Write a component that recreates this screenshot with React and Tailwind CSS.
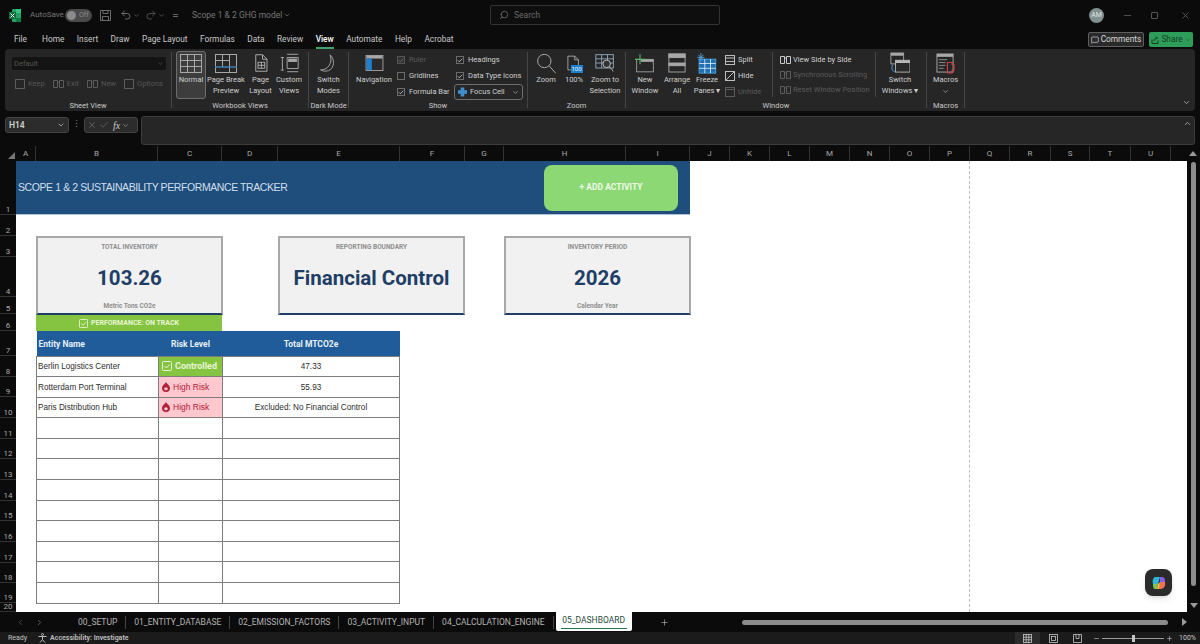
import React from 'react';
import { Search, ChevronDown, Undo2, Redo2, MessageSquare, Minus, Plus, X, Check, ChevronLeft, ChevronRight } from 'lucide-react';

const columns = [
  { label: 'A', w: 'w-[20px]' }, { label: 'B', w: 'w-[122px]' }, { label: 'C', w: 'w-[64px]' },
  { label: 'D', w: 'w-[56px]' }, { label: 'E', w: 'w-[122px]' }, { label: 'F', w: 'w-[65px]' },
  { label: 'G', w: 'w-[39px]' }, { label: 'H', w: 'w-[122px]' }, { label: 'I', w: 'w-[64px]' },
  { label: 'J', w: 'w-[40px]' }, { label: 'K', w: 'w-[40px]' }, { label: 'L', w: 'w-[40px]' },
  { label: 'M', w: 'w-[40px]' }, { label: 'N', w: 'w-[40px]' }, { label: 'O', w: 'w-[40px]' },
  { label: 'P', w: 'w-[40px]' }, { label: 'Q', w: 'w-[40px]' }, { label: 'R', w: 'w-[41px]' },
  { label: 'S', w: 'w-[39px]' }, { label: 'T', w: 'w-[41px]' }, { label: 'U', w: 'w-[40px]' },
];

const rowHeads = [
  { n: 1, h: 'h-[54px]' }, { n: 2, h: 'h-[21px]' }, { n: 3, h: 'h-[21px]' }, { n: 4, h: 'h-[40px]' },
  { n: 5, h: 'h-[17px]' }, { n: 6, h: 'h-[17px]' }, { n: 7, h: 'h-[25px]' }, { n: 8, h: 'h-[21px]' },
  { n: 9, h: 'h-[20px]' }, { n: 10, h: 'h-[21px]' }, { n: 11, h: 'h-[21px]' }, { n: 12, h: 'h-[20px]' },
  { n: 13, h: 'h-[21px]' }, { n: 14, h: 'h-[21px]' }, { n: 15, h: 'h-[20px]' }, { n: 16, h: 'h-[21px]' },
  { n: 17, h: 'h-[21px]' }, { n: 18, h: 'h-[20px]' }, { n: 19, h: 'h-[20px]' }, { n: 20, h: 'h-[9px]' },
];

const menu = ['Home', 'Insert', 'Draw', 'Page Layout', 'Formulas', 'Data', 'Review', 'View', 'Automate', 'Help', 'Acrobat'];

const entities = [
  { name: 'Berlin Logistics Center', risk: 'ok', total: '47.33' },
  { name: 'Rotterdam Port Terminal', risk: 'high', total: '55.93' },
  { name: 'Paris Distribution Hub', risk: 'high', total: 'Excluded: No Financial Control' },
  {}, {}, {}, {}, {}, {}, {}, {}, {},
];

const Ico = ({ className, children, box = '0 0 24 24' }) => (
  <svg className={className} viewBox={box} fill="none" stroke="currentColor" strokeWidth="1.200">{children}</svg>
);

const GridIcon = () => (
  <svg className="w-[22px] h-[19px] text-[#a8a8a8]" viewBox="0 0 22 19" fill="none" stroke="currentColor">
    <rect x="0.500" y="0.500" width="21" height="18" />
    <path d="M0 6.500h22M0 12.500h22M7.500 0v19M14.500 0v19" />
  </svg>
);
const BreakIcon = () => (
  <svg className="w-[22px] h-[19px] text-[#a8a8a8]" viewBox="0 0 22 19" fill="none" stroke="currentColor">
    <rect x="0.500" y="0.500" width="21" height="18" />
    <path d="M0 6.500h14M7.500 0v13M14.500 0v19" />
    <path d="M0 13h22" stroke="#3f7fb5" strokeWidth="1.500" />
  </svg>
);
const PageIcon = () => (
  <Ico className="w-[18px] h-[20px] text-[#b5b5b5]">
    <path d="M5 1h9l6 6v16H5z" />
    <path d="M14 1v6h6" />
    <rect x="8" y="11" width="9" height="8" />
    <path d="M8 15h9M12.500 11v8" />
  </Ico>
);
const CustomIcon = () => (
  <Ico className="w-[19px] h-[20px] text-[#a8a8a8]">
    <path d="M9 1h14M9 23h14M3 5v16M1 5h4M1 21h4M9 5h14v14H9z" />
    <rect x="11" y="7" width="10" height="3" fill="#a8a8a8" />
  </Ico>
);
const MoonIcon = () => (
  <Ico className="w-[19px] h-[21px] text-[#a8a8a8]">
    <path d="M14 1c6 5 6 17-2 20-3 1-7 1-10-1 8 1 16-8 12-19z" />
  </Ico>
);
const NavIcon = () => (
  <svg className="w-[19px] h-[16px]" viewBox="0 0 20 18">
    <rect x="0.500" y="0.500" width="19" height="17" fill="#2a2a2a" stroke="#a8a8a8" />
    <rect x="1" y="1" width="18" height="3" fill="#a8a8a8" />
    <rect x="1" y="4" width="6" height="13" fill="#1d7fd0" />
  </svg>
);
const ZoomIcon = () => (
  <Ico className="w-[20px] h-[21px] text-[#a8a8a8]">
    <circle cx="10" cy="9" r="8" />
    <path d="M16 15l8 9" />
  </Ico>
);
const HundredIcon = () => (
  <div className="relative w-[17px] h-[20px]">
    <Ico className="w-[15px] h-[20px] text-[#c0c0c0]">
      <path d="M3 1h11l6 6v16H3z" />
      <path d="M14 1v6h6" />
    </Ico>
    <span className="absolute right-0 bottom-0 w-[12px] h-[8px] bg-[#1d7fd0] text-[6px] leading-[8px] text-center text-[#e8f4ff]">100</span>
  </div>
);
const ZoomSelIcon = () => (
  <svg className="w-[20px] h-[20px]" viewBox="0 0 24 24" fill="none" stroke="#8fa7ba" strokeWidth="1.100">
    <rect x="1" y="2" width="21" height="16" />
    <path d="M1 7h21M1 12h21M8 2v16M15 2v16" />
    <circle cx="14" cy="13" r="4.500" fill="#333" stroke="#c4c4c4" />
    <path d="M17 16l5 6" stroke="#c4c4c4" />
  </svg>
);
const NewWindowIcon = () => (
  <svg className="w-[20px] h-[19px]" viewBox="0 0 24 22" fill="none">
    <rect x="2" y="6" width="20" height="15" stroke="#a8a8a8" />
    <rect x="7" y="6" width="15" height="3" fill="#a8a8a8" />
    <path d="M6 0v12M0 6h12" stroke="#62b36a" strokeWidth="1.300" />
  </svg>
);
const ArrangeIcon = () => (
  <svg className="w-[18px] h-[20px]" viewBox="0 0 20 22" fill="none" stroke="#a8a8a8">
    <rect x="1" y="1" width="18" height="20" />
    <rect x="1" y="1" width="18" height="4" fill="#a8a8a8" />
    <rect x="1" y="11" width="18" height="3" fill="#a8a8a8" />
  </svg>
);
const FreezeIcon = () => (
  <svg className="w-[20px] h-[21px]" viewBox="0 0 22 24" fill="none">
    <rect x="2" y="7" width="19" height="16" fill="#1f6fb2" stroke="#4fa3e0" />
    <path d="M2 12h19M2 17.500h19M8.500 7v16M15 7v16" stroke="#d5e8f6" />
    <path d="M4 0v10M0 5h8M1 2l6 6M7 2l-6 6" stroke="#4fa3e0" />
  </svg>
);
const SwitchIcon = () => (
  <svg className="w-[20px] h-[22px]" viewBox="0 0 22 24" fill="none">
    <rect x="1" y="1" width="14" height="12" stroke="#a8a8a8" />
    <rect x="1" y="1" width="14" height="3" fill="#a8a8a8" />
    <rect x="6" y="9" width="16" height="13" fill="#2a2a2a" stroke="#b8b8b8" />
    <rect x="6" y="9" width="16" height="3" fill="#b8b8b8" />
    <path d="M3 14c-2 3-1 7 3 8" stroke="#3f82c0" strokeWidth="1.300" />
  </svg>
);
const MacroIcon = () => (
  <svg className="w-[19px] h-[21px]" viewBox="0 0 20 22" fill="none">
    <rect x="1" y="1" width="17" height="19" stroke="#a8a8a8" />
    <rect x="1" y="1" width="17" height="3" fill="#a8a8a8" />
    <path d="M3 7h9M3 10h7M3 13h7M3 16h5" stroke="#8c8c8c" />
    <path d="M12 10h5v2h2v6h-2v3h-5z" stroke="#c9403f" strokeWidth="1.200" />
  </svg>
);
const SmallPane = ({ dim, kind }) => (
  <svg className={dim ? 'w-[10px] h-[10px] text-[#5c5c5c]' : 'w-[10px] h-[10px] text-[#bdbdbd]'} viewBox="0 0 10 10" fill="none" stroke="currentColor">
    <rect x="0.500" y="0.500" width="9" height="9" />
    {kind === 'split' && <path d="M0 3h10M0 6.500h10" />}
    {kind === 'hide' && <path d="M1 9l8-8" />}
    {kind === 'unhide' && <path d="M0 2.500h10" />}
  </svg>
);
const SideIcon = ({ dim }) => (
  <svg className={dim ? 'w-[11px] h-[9px] text-[#5c5c5c]' : 'w-[11px] h-[9px] text-[#c8c8c8]'} viewBox="0 0 11 9" fill="none" stroke="currentColor">
    <path d="M0.500 1.500h4v7h-4zM6.500 1.500h4v7h-4zM4.500 3h2" />
  </svg>
);

const Box = ({ checked, dim }) => (
  <span className={dim ? 'w-[8px] h-[8px] border border-[#555] bg-[#333] flex items-center justify-center' : 'w-[8px] h-[8px] border border-[#6b6b6b] flex items-center justify-center'}>
    {checked && <Check className={dim ? 'w-[7px] h-[7px] text-[#777]' : 'w-[7px] h-[7px] text-[#dcdcdc]'} strokeWidth={3} />}
  </span>
);

const Check2 = ({ label, checked, dim }) => (
  <div className="flex items-center gap-[4px] h-[16px] whitespace-nowrap">
    <Box checked={checked} dim={dim} />
    <span className={dim ? 'text-[#5a5a5a]' : ''}>{label}</span>
  </div>
);

const Big = ({ icon, lines, w, dd }) => (
  <div className={`flex flex-col items-center ${w}`}>
    <div className="h-[22px] flex items-center justify-center">{icon}</div>
    <div className="mt-[1px] leading-[10.500px] text-center whitespace-nowrap">
      {lines.map((l) => <div key={l}>{l}</div>)}
    </div>
    {dd && <ChevronDown className="mt-[2px] w-[7px] h-[7px]" />}
  </div>
);

const Group = ({ w, label, children }) => (
  <div className={`${w} shrink-0 relative flex flex-col my-[3px] border-r border-[#454545]`}>
    <div className="flex-1 flex items-start">{children}</div>
    <div className="h-[11px] leading-[11px] mb-[-3px] text-center text-[#c8c8c8] whitespace-nowrap">{label}</div>
  </div>
);

const Ribbon = () => (
  <div className="mx-[5px] h-[62px] bg-[#262626] rounded-[4px] flex text-[7.500px] text-[#cfcfcf] relative">
    <Group w="w-[167px]" label="Sheet View">
      <div className="w-full pl-[7px] pr-[5px] pt-[5px]">
        <div className="h-[13px] bg-[#141414] rounded-[2px] flex items-center justify-between px-[2px] text-[#555] text-[7.500px]">
          <span>Default</span>
          <ChevronDown className="w-[7px] h-[7px]" />
        </div>
        <div className="mt-[8px] flex gap-[8px] pl-[3px] text-[#555] whitespace-nowrap">
          <span className="flex items-center gap-[3px]"><SmallPane dim />Keep</span>
          <span className="flex items-center gap-[3px]"><SideIcon dim />Exit</span>
          <span className="flex items-center gap-[3px]"><SideIcon dim />New</span>
          <span className="flex items-center gap-[3px]"><SmallPane dim />Options</span>
        </div>
      </div>
    </Group>
    <Group w="w-[137px]" label="Workbook Views">
      <div className="flex pl-[4px] items-start">
        <div className="w-[30px] h-[48px] border border-[#6e6e6e] rounded-[3px] bg-[#3d3d3d] mt-[-1px]">
          <Big icon={<GridIcon />} lines={['Normal']} w="w-full" />
        </div>
        <Big icon={<BreakIcon />} lines={['Page Break', 'Preview']} w="w-[40px]" />
        <Big icon={<PageIcon />} lines={['Page', 'Layout']} w="w-[29px]" />
        <Big icon={<CustomIcon />} lines={['Custom', 'Views']} w="w-[28px]" />
      </div>
    </Group>
    <Group w="w-[40px]" label="Dark Mode">
      <Big icon={<MoonIcon />} lines={['Switch', 'Modes']} w="w-full" />
    </Group>
    <Group w="w-[179px]" label="Show">
      <div className="flex">
        <div className="w-[48px] pl-[2px]"><Big icon={<NavIcon />} lines={['Navigation']} w="w-full" /></div>
        <div className="flex flex-col w-[59px]">
          <Check2 label="Ruler" checked dim />
          <Check2 label="Gridlines" />
          <Check2 label="Formula Bar" checked />
        </div>
        <div className="flex flex-col">
          <Check2 label="Headings" checked />
          <Check2 label="Data Type Icons" checked />
          <div className="h-[16px] w-[69px] ml-[-2px] border border-[#6e6e6e] rounded-[3px] flex items-center justify-between px-[3px]">
            <span className="flex items-center gap-[3px]">
              <svg className="w-[9px] h-[10px]" viewBox="0 0 10 10" fill="#3f8fd0"><rect x="3" y="0" width="4" height="10" /><rect x="0" y="3" width="10" height="4" /></svg>
              Focus Cell
            </span>
            <ChevronDown className="w-[7px] h-[7px]" />
          </div>
        </div>
      </div>
    </Group>
    <Group w="w-[98px]" label="Zoom">
      <div className="flex pl-[4px]">
        <Big icon={<ZoomIcon />} lines={['Zoom']} w="w-[28px]" />
        <Big icon={<HundredIcon />} lines={['100%']} w="w-[28px]" />
        <Big icon={<ZoomSelIcon />} lines={['Zoom to', 'Selection']} w="w-[34px]" />
      </div>
    </Group>
    <Group w="w-[301px]" label="Window">
      <div className="flex pl-[3px]">
        <Big icon={<NewWindowIcon />} lines={['New', 'Window']} w="w-[32px]" />
        <Big icon={<ArrangeIcon />} lines={['Arrange', 'All']} w="w-[32px]" />
        <Big icon={<FreezeIcon />} lines={['Freeze', 'Panes ▾']} w="w-[28px]" />
        <div className="flex flex-col ml-[4px] w-[47px]">
          <div className="flex items-center gap-[3px] h-[16px]"><SmallPane kind="split" />Split</div>
          <div className="flex items-center gap-[3px] h-[16px]"><SmallPane kind="hide" />Hide</div>
          <div className="flex items-center gap-[3px] h-[16px] text-[#5a5a5a]"><SmallPane dim kind="unhide" />Unhide</div>
        </div>
        <div className="flex flex-col pl-[7px] w-[104px] border-l border-[#454545] h-[45px] whitespace-nowrap">
          <div className="flex items-center gap-[2px] h-[16px]"><SideIcon />View Side by Side</div>
          <div className="flex items-center gap-[2px] h-[16px] text-[#5a5a5a]"><SideIcon dim />Synchronous Scrolling</div>
          <div className="flex items-center gap-[2px] h-[16px] text-[#5a5a5a]"><SideIcon dim />Reset Window Position</div>
        </div>
        <div className="border-l border-[#454545] h-[45px] w-[49px] ml-[-1px]">
          <Big icon={<SwitchIcon />} lines={['Switch', 'Windows ▾']} w="w-full" />
        </div>
      </div>
    </Group>
    <Group w="w-[38px]" label="Macros">
      <Big icon={<MacroIcon />} lines={['Macros']} w="w-full" dd />
    </Group>
    <ChevronDown className="absolute right-[4px] bottom-[4px] w-[9px] h-[9px] text-[#bdbdbd]" />
  </div>
);

const TitleBar = () => (
  <div className="h-[30px] flex items-center text-[8px] text-[#767676] relative shrink-0">
    <svg className="ml-[9px] w-[12px] h-[13px]" viewBox="0 0 12 13">
      <rect x="3" y="0" width="9" height="13" rx="1" fill="#21a366" />
      <rect x="7" y="0" width="5" height="4" fill="#33c481" />
      <rect x="7" y="9" width="5" height="4" fill="#107c41" />
      <rect x="0" y="3" width="7" height="7" fill="#0f6b38" />
      <path d="M1.500 4.500l4 4M5.500 4.500l-4 4" stroke="#fff" strokeWidth="1" />
    </svg>
    <span className="ml-[9px] w-[31px] whitespace-nowrap">AutoSave</span>
    <span className="ml-[4px] w-[27px] h-[13px] rounded-full bg-[#4a4a4a] flex items-center pl-[2px] gap-[3px]">
      <span className="w-[9px] h-[9px] rounded-full bg-[#8a8a8a]" />
      <span className="text-[7px] text-[#8a8a8a]">Off</span>
    </span>
    <svg className="ml-[8px] w-[11px] h-[11px] text-[#6c6c6c]" viewBox="0 0 11 11" fill="none" stroke="currentColor">
      <path d="M0.500 0.500h10v10h-10zM3 0.500v3h5v-3M2.500 10.500v-4h6v4" />
    </svg>
    <Undo2 className="ml-[9px] w-[12px] h-[12px] text-[#6c6c6c]" />
    <ChevronDown className="w-[7px] h-[7px] ml-[1px]" />
    <Redo2 className="ml-[5px] w-[12px] h-[12px] text-[#4f4f4f]" />
    <ChevronDown className="w-[7px] h-[7px] ml-[1px]" />
    <span className="ml-[8px] w-[5px] border-t border-b border-[#666] h-[3px]" />
    <span className="ml-[14px] whitespace-nowrap text-[8.500px]">Scope 1 &amp; 2 GHG model</span>
    <ChevronDown className="w-[8px] h-[8px] ml-[1px]" />
    <div className="absolute left-[490px] top-[5px] w-[230px] h-[20px] border border-[#333] rounded-[2px] bg-[#0e0e0e] flex items-center pl-[8px] gap-[5px] text-[8.500px] text-[#6a6a6a]">
      <Search className="w-[10px] h-[10px] -scale-x-100" />
      Search
    </div>
    <div className="ml-auto flex items-center">
      <span className="w-[15px] h-[15px] rounded-full bg-[#82918f] text-[7px] text-[#dfe5e5] flex items-center justify-center">AM</span>
      <Minus className="ml-[18px] w-[11px] h-[11px] text-[#555]" />
      <span className="ml-[18px] w-[7px] h-[7px] border border-[#555] rounded-[1px]" />
      <X className="ml-[22px] mr-[9px] w-[11px] h-[11px] text-[#555]" />
    </div>
  </div>
);

const MenuRow = () => (
  <div className="h-[19px] flex items-center text-[8.300px] text-[#c9c9c9] pl-[14px] shrink-0 relative">
    <span className="mr-[15px]">File</span>
    <div className="flex gap-[12.500px]">
      {menu.map((m) => (
        <span key={m} className={m === 'View' ? 'relative text-white font-medium' : ''}>
          {m}
          {m === 'View' && <span className="absolute left-0 right-0 bottom-[-3px] h-[2px] bg-[#3fa36b]" />}
        </span>
      ))}
    </div>
    <div className="ml-auto mr-[7px] flex gap-[5px]">
      <span className="h-[15px] w-[56px] border border-[#5f5f5f] rounded-[2px] bg-[#2a2a2a] flex items-center justify-center gap-[2px] text-[#d8d8d8]">
        <MessageSquare className="w-[8px] h-[8px]" />Comments
      </span>
      <span className="h-[15px] w-[44px] rounded-[2px] bg-[#2e9d59] flex items-center justify-center gap-[2px] text-[#123f24]">
        <svg className="w-[8px] h-[8px]" viewBox="0 0 8 8" fill="none" stroke="currentColor"><path d="M1 3.500v4h6v-3M3 5c0-2 1-3 3-3M5 0.500l1.500 1.500-1.500 1.500" /></svg>
        Share
        <ChevronDown className="w-[6px] h-[6px]" />
      </span>
    </div>
  </div>
);

const FormulaBar = () => (
  <div className="mt-[5px] h-[30px] flex items-start px-[5px] gap-[3px] shrink-0">
    <div className="w-[64px] h-[16px] mt-[1px] rounded-[3px] bg-[#2c2c2c] border border-[#444] flex items-center justify-between px-[3px] text-[8.500px] font-semibold text-[#d0d0d0]">
      H14 <ChevronDown className="w-[8px] h-[8px]" />
    </div>
    <div className="w-[9px] mt-[4px] text-[#8a8a8a] text-[9px] leading-[9px] text-center">⋮</div>
    <div className="w-[54px] h-[16px] mt-[1px] rounded-[3px] bg-[#2c2c2c] border border-[#444] flex items-center gap-[2px] px-[2px] text-[#666]">
      <X className="w-[10px] h-[10px]" />
      <Check className="w-[10px] h-[10px]" />
      <span className="font-['Liberation_Serif',serif] italic text-[10px] text-[#c8c8c8] ml-[2px]">fx</span>
      <ChevronDown className="w-[7px] h-[7px] text-[#bbb]" />
    </div>
    <div className="flex-1 h-[29px] rounded-[3px] bg-[#262626] border border-[#3c3c3c] flex justify-end p-[2px]">
      <ChevronDown className="w-[9px] h-[9px] rotate-180 text-[#bdbdbd]" />
    </div>
  </div>
);

const ColumnHeaders = () => (
  <div className="h-[15px] flex text-[8px] text-[#a9a9a9] shrink-0">
    <div className="w-[16px] flex items-end justify-end pb-[2px] pr-[1px]">
      <span className="w-0 h-0 border-b-[7px] border-l-[7px] border-b-[#777] border-l-transparent" />
    </div>
    {columns.map((c) => (
      <div key={c.label} className={`${c.w} border-r border-[#333] flex items-center justify-center`}>{c.label}</div>
    ))}
    <div className="flex-1 flex items-center justify-end pr-[3px]">
      <span className="w-0 h-0 border-x-[4px] border-b-[5px] border-x-transparent border-b-[#999]" />
    </div>
  </div>
);

const Card = ({ label, value, sub }) => (
  <div className="w-[187px] h-[79px] border-2 border-[#a8a8a8] border-b-[#1f3f66] bg-[#f1f1f1] flex flex-col items-center font-['Roboto',sans-serif] shrink-0">
    <div className="mt-[4px] h-[10px] leading-[10px] text-[6.500px] font-bold text-[#8f8f8f]">{label}</div>
    <div className="mt-[11px] h-[30px] leading-[30px] text-[20.500px] font-bold text-[#1f3e66] whitespace-nowrap">{value}</div>
    <div className="mt-[8px] h-[10px] leading-[10px] text-[6.500px] font-bold text-[#8f8f8f]">{sub}</div>
  </div>
);

const CheckSquare = ({ className }) => (
  <svg className={className} viewBox="0 0 10 10" fill="none" stroke="currentColor" strokeWidth="1">
    <rect x="0.500" y="0.500" width="9" height="9" rx="1" />
    <path d="M2.500 5l2 2 3-3.500" />
  </svg>
);

const Drop = () => (
  <svg className="w-[8px] h-[10px]" viewBox="0 0 8 10">
    <path d="M4 0c1 2 4 3.500 4 6.300A4 3.700 0 0 1 0 6.300C0 3.500 3 2 4 0z" fill="#b3203a" />
    <ellipse cx="4" cy="6.800" rx="1.800" ry="1.500" fill="#ffc7ce" />
  </svg>
);

const RiskCell = ({ risk }) => {
  if (risk === 'ok') {
    return (
      <td className="border border-[#7d7d7d] bg-[#84c441] text-[#e8f6d5] font-['Roboto',sans-serif] font-bold text-[9px] pl-[3px]">
        <span className="flex items-center gap-[3px]"><CheckSquare className="w-[10px] h-[10px]" />Controlled</span>
      </td>
    );
  }
  if (risk === 'high') {
    return (
      <td className="border border-[#7d7d7d] bg-[#ffc7ce] text-[#b3203a] text-[8.500px] pl-[3px]">
        <span className="flex items-center gap-[3px]"><Drop />High Risk</span>
      </td>
    );
  }
  return <td className="border border-[#7d7d7d]" />;
};

const EntityTable = () => (
  <table className="w-[364px] table-fixed border-collapse font-['Liberation_Sans',Arial,sans-serif] text-[8.200px] text-[#2d2d2d]">
    <thead>
      <tr className="h-[25px] bg-[#1f5c99] text-[#e6eff8] font-['Roboto',sans-serif] text-[8.500px] font-bold">
        <th className="w-[122px] text-left pl-[2px] pt-[3px]">Entity Name</th>
        <th className="w-[64px] text-center pt-[3px]">Risk Level</th>
        <th className="text-center pt-[3px]">Total MTCO2e</th>
      </tr>
    </thead>
    <tbody>
      {entities.map((e, i) => (
        <tr key={i} className="h-[20.600px]">
          <td className="border border-[#7d7d7d] pl-[1px] pt-[2px] whitespace-nowrap">{e.name}</td>
          <RiskCell risk={e.risk} />
          <td className="border border-[#7d7d7d] pt-[2px] text-center">{e.total}</td>
        </tr>
      ))}
    </tbody>
  </table>
);

const Sheet = () => (
  <div className="h-[451px] flex shrink-0">
    <div className="w-[16px] text-[8px] text-[#a9a9a9] overflow-hidden">
      {rowHeads.map((r) => (
        <div key={r.n} className={`${r.h} border-b border-[#333] flex items-end justify-center leading-[9px]`}>{r.n}</div>
      ))}
    </div>
    <div className="w-[1171px] bg-white relative overflow-hidden">
      <div className="w-[674px] h-[54px] bg-[#1f4e7c] border-b border-[#a9c4de] flex items-center justify-between pl-[2px] pr-[12px]">
        <span className="mt-[1px] font-['Liberation_Sans',Arial,sans-serif] text-[10.500px] tracking-[-0.410px] text-[#cfdfee] whitespace-nowrap">SCOPE 1 &amp; 2 SUSTAINABILITY PERFORMANCE TRACKER</span>
        <div className="w-[134px] h-[46px] rounded-[8px] bg-[#8cd874] flex items-center justify-center font-['Roboto',sans-serif] font-bold text-[8.500px] text-[#eef9e8]">+ ADD ACTIVITY</div>
      </div>
      <div className="pl-[20px] pt-[21px]">
        <div className="flex">
          <Card label="TOTAL INVENTORY" value="103.26" sub="Metric Tons CO2e" />
          <div className="ml-[55px]"><Card label="REPORTING BOUNDARY" value="Financial Control" /></div>
          <div className="ml-[39px]"><Card label="INVENTORY PERIOD" value="2026" sub="Calendar Year" /></div>
        </div>
        <div className="w-[186px] h-[16px] bg-[#84c441] flex items-center justify-center gap-[3px] font-['Roboto',sans-serif] font-bold text-[7px] text-[#e8f6d5]">
          <CheckSquare className="w-[9px] h-[9px]" />PERFORMANCE: ON TRACK
        </div>
        <EntityTable />
      </div>
      <div className="absolute left-[953px] top-0 bottom-0 border-l border-dashed border-[#bdbdbd]" />
      <div className="absolute right-[15px] bottom-[16px] w-[27px] h-[27px] rounded-[8px] bg-[#2b2b2b] shadow-md flex items-center justify-center">
        <svg className="w-[14px] h-[14px]" viewBox="0 0 14 14">
          <path d="M3 1h5L6 8H1C0 5 1 2 3 1z" fill="#2fb6d8" />
          <path d="M1 8h5l-1 5H3C1 13 1 10 1 8z" fill="#7ac74f" />
          <path d="M8 1h2c3 0 3 3 3 5H8z" fill="#8a5fe0" />
          <path d="M8 6h5c1 3-1 7-4 7H6z" fill="#f0705a" />
          <path d="M5 13l1-5 2-2-1 7z" fill="#f4b93e" />
        </svg>
      </div>
    </div>
    <div className="flex-1 flex flex-col items-center">
      <div className="mt-[1px] w-[5px] h-[424px] bg-[#8c8c8c] rounded-full" />
      <span className="mt-auto mb-[4px] w-0 h-0 border-x-[4px] border-t-[5px] border-x-transparent border-t-[#999]" />
    </div>
  </div>
);

const sheets = ['00_SETUP', '01_ENTITY_DATABASE', '02_EMISSION_FACTORS', '03_ACTIVITY_INPUT', '04_CALCULATION_ENGINE'];

const SheetTabs = () => (
  <div className="h-[20px] flex items-center shrink-0 text-[8.500px] text-[#b4b4b4]">
    <ChevronLeft className="ml-[16px] w-[9px] h-[9px] text-[#555]" />
    <ChevronRight className="ml-[10px] w-[9px] h-[9px] text-[#777]" />
    <div className="ml-[26px] flex items-center">
      {sheets.map((s) => (
        <span key={s} className="h-[13px] leading-[13px] px-[8px] border-r border-[#444] whitespace-nowrap">{s}</span>
      ))}
    </div>
    <div className="ml-[2px] h-[19px] self-start w-[76px] bg-white rounded-b-[2px] text-[#1f4a38] flex flex-col items-center justify-center">
      <span className="leading-[11px]">05_DASHBOARD</span>
      <span className="w-[66px] h-[1px] bg-[#1f7a4d] mt-[2px]" />
    </div>
    <Plus className="ml-[28px] w-[9px] h-[9px] text-[#a0a0a0]" />
    <div className="ml-auto mr-[14px] w-[426px] h-[5px] rounded-full bg-[#8c8c8c]" />
    <span className="mr-[13px] w-0 h-0 border-y-[4px] border-l-[5px] border-y-transparent border-l-[#999]" />
  </div>
);

const StatusBar = () => (
  <div className="h-[12px] bg-[#1b1b1b] flex items-center text-[7px] text-[#c0c0c0] shrink-0">
    <span className="ml-[8px]">Ready</span>
    <svg className="ml-[11px] w-[9px] h-[10px]" viewBox="0 0 9 10" fill="none" stroke="#bdbdbd"><circle cx="4.500" cy="1.500" r="1" /><path d="M0.500 3.500h8M4.500 3.500v3M4.500 6.500L2 9.500M4.500 6.500l2.500 3" /></svg>
    <span className="ml-[3px] font-semibold">Accessibility: Investigate</span>
    <div className="ml-auto flex items-center text-[#c8c8c8]">
      <span className="w-[25px] h-[12px] bg-[#2b2b2b] flex items-center justify-center">
        <svg className="w-[9px] h-[9px]" viewBox="0 0 9 9" fill="none" stroke="currentColor" strokeWidth="0.800"><rect x="0.500" y="0.500" width="8" height="8" /><path d="M0 3.200h9M0 5.800h9M3.200 0v9M5.800 0v9" /></svg>
      </span>
      <svg className="ml-[9px] w-[9px] h-[9px]" viewBox="0 0 9 9" fill="none" stroke="currentColor" strokeWidth="0.800"><rect x="0.500" y="0.500" width="8" height="8" /><rect x="2.500" y="2.500" width="4" height="4" /></svg>
      <svg className="ml-[15px] w-[9px] h-[9px]" viewBox="0 0 9 9" fill="none" stroke="currentColor" strokeWidth="0.800"><path d="M0.500 0.500h8v8h-8zM3 0.500v4h3v-4" /></svg>
      <Minus className="ml-[11px] w-[7px] h-[7px]" />
      <div className="ml-[2px] w-[62px] h-[1px] bg-[#9a9a9a] relative">
        <span className="absolute left-[30px] top-[-3px] w-[3px] h-[7px] bg-[#c8c8c8]" />
      </div>
      <Plus className="ml-[2px] w-[7px] h-[7px]" />
      <span className="ml-[6px] mr-[4px]">100%</span>
    </div>
  </div>
);

const App = () => (
  <div className="w-[1200px] h-[644px] bg-[#0b0b0b] flex flex-col overflow-hidden font-['Roboto',sans-serif]">
    <TitleBar />
    <MenuRow />
    <Ribbon />
    <FormulaBar />
    <ColumnHeaders />
    <Sheet />
    <SheetTabs />
    <StatusBar />
  </div>
);

export default App;
